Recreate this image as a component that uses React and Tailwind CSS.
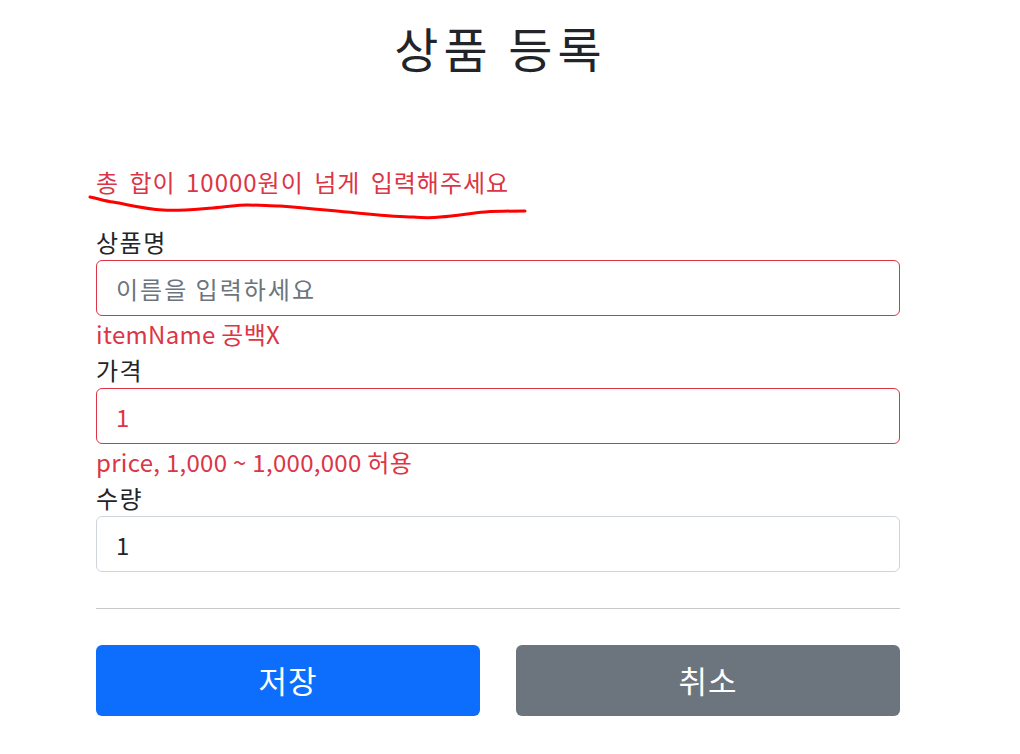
import React from "react";

const font = { fontFamily: '"Noto Sans CJK KR", "Noto Sans", sans-serif' };

function Field({ label, placeholder, value, error, invalid, valueClass }) {
  return (
    <div>
      <label className="block text-[24px] leading-[36px] tracking-[1.5px] text-[#212529]">{label}</label>
      <input
        type="text"
        placeholder={placeholder}
        defaultValue={value}
        className={`block w-full h-[56px] rounded-[6px] border px-[19px] text-[24px] tracking-[2px] outline-none placeholder:text-[#6c757d] ${
          invalid ? "border-[#dc3545]" : "border-[#ced4da]"
        } ${valueClass}`}
      />
      {error && (
        <div className="text-[24px] leading-[36px] tracking-[0.3px] text-[#dc3545]">{error}</div>
      )}
    </div>
  );
}

export default function App() {
  return (
    <div className="relative min-h-[754px] bg-white" style={font}>
      <div className="ml-[96px] w-[804px]">
        <h2 className="pt-[18px] pl-[5px] text-center text-[48px] leading-[58px] tracking-[5px] text-[#212529]">
          상품 등록
        </h2>

        <div className="mt-[88px] text-[24px] leading-[36px] tracking-[1px] text-[#dc3545] [word-spacing:4px]">
          총 합이 10000원이 넘게 입력해주세요
        </div>

        <div className="mt-[24px] flex flex-col">
          <Field
            label="상품명"
            placeholder="이름을 입력하세요"
            error="itemName 공백X"
            invalid
            valueClass="text-[#212529]"
          />
          <Field
            label="가격"
            value="1"
            error="price, 1,000 ~ 1,000,000 허용"
            invalid
            valueClass="text-[#dc3545]"
          />
          <Field label="수량" value="1" valueClass="text-[#212529]" />
        </div>

        <hr className="mt-[36px] border-0 border-t border-[#c8c9ca]" />

        <div className="mt-[36px] grid grid-cols-2 gap-[36px]">
          <button className="h-[71px] rounded-[6px] bg-[#0d6efd] text-[31px] tracking-[1px] text-white">
            저장
          </button>
          <button className="h-[71px] rounded-[6px] bg-[#6c757d] text-[31px] tracking-[1px] text-white">
            취소
          </button>
        </div>
      </div>

      {/* hand-drawn underline annotation */}
      <svg
        className="pointer-events-none absolute left-0 top-0"
        width="1020"
        height="754"
        viewBox="0 0 1020 754"
      >
        <path
          d="M90 197 C 100 199, 105 201, 113 202 C 130 205, 145 209, 163 210 C 180 211, 198 209, 213 208 C 228 207, 236 205, 247 205 C 260 205, 270 206, 280 206 C 305 208, 325 210, 347 212 C 370 214, 395 217, 413 217 C 425 218, 432 218, 440 217 C 458 216, 470 213, 485 212 C 500 211, 512 211, 525 211"
          fill="none"
          stroke="#ff0000"
          strokeWidth="3"
          strokeLinecap="round"
        />
      </svg>
    </div>
  );
}
